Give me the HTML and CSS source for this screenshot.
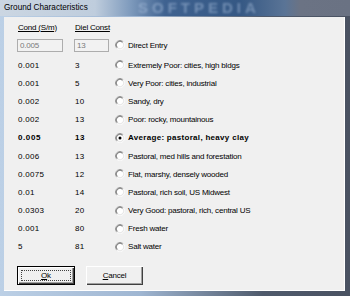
FILE: index.html
```html
<!DOCTYPE html>
<html lang="en">
<head>
  <meta charset="UTF-8" />
  <title>Ground Characteristics</title>
  <link rel="stylesheet" href="styles.css">
</head>
<body>

  <div class="window">
    <div class="titlebar">
      <span class="title">Ground Characteristics</span>
      <span class="watermark">SOFTPEDIA</span>
    </div>

    <div class="client">
      <div class="table">
        <div class="head">Cond (S/m)</div>
        <div class="head">Diel Const</div>
        <div></div>

        <div class="cell"><span class="edit wide">0.005</span></div>
        <div class="cell"><span class="edit narrow">13</span></div>
        <label class="option">
          <svg class="radio" viewBox="0 0 12 12"><use href="#radio" /></svg>Direct Entry
        </label>
      </div>

      <div class="table rows" id="rows"></div>

      <div class="buttons">
        <button class="btn default"><u>O</u>k</button>
        <button class="btn"><u>C</u>ancel</button>
      </div>
    </div>
  </div>

  <svg width="0" height="0" style="position:absolute">
    <defs>
      <g id="radio" fill="none" stroke-width="1">
        <circle cx="6" cy="6" r="5" fill="#fff" stroke="none" />
        <path d="M2.1 9.9A5.5 5.5 0 0 1 9.9 2.1" stroke="#a0a0a0" />
        <path d="M2.8 9.2A4.5 4.5 0 0 1 9.2 2.8" stroke="#505050" />
        <path d="M9.9 2.1A5.5 5.5 0 0 1 2.1 9.9" stroke="#fff" />
        <path d="M9.2 2.8A4.5 4.5 0 0 1 2.8 9.2" stroke="#dcdcdc" />
      </g>
    </defs>
  </svg>

  <script>
    var grounds = [
      ['0.001', '3', 'Extremely Poor: cities, high bldgs'],
      ['0.001', '5', 'Very Poor: cities, industrial'],
      ['0.002', '10', 'Sandy, dry'],
      ['0.002', '13', 'Poor: rocky, mountainous'],
      ['0.005', '13', 'Average: pastoral, heavy clay', true],
      ['0.006', '13', 'Pastoral, med hills and forestation'],
      ['0.0075', '12', 'Flat, marshy, densely wooded'],
      ['0.01', '14', 'Pastoral, rich soil, US Midwest'],
      ['0.0303', '20', 'Very Good: pastoral, rich, central US'],
      ['0.001', '80', 'Fresh water'],
      ['5', '81', 'Salt water']
    ];

    var rows = document.getElementById('rows');
    grounds.forEach(function (g) {
      var cls = g[3] ? ' bold' : '';
      rows.innerHTML +=
        '<div class="num' + cls + '">' + g[0] + '</div>' +
        '<div class="num' + cls + '">' + g[1] + '</div>' +
        '<label class="option' + cls + '">' +
          '<svg class="radio" viewBox="0 0 12 12"><use href="#radio" />' +
          (g[3] ? '<circle cx="6" cy="6" r="1.8" fill="#000" />' : '') +
          '</svg>' + g[2] +
        '</label>';
    });
  </script>

</body>
</html>
```

FILE: styles.css
```css
* {
  margin: 0;
  padding: 0;
  box-sizing: border-box;
}

html, body {
  width: 350px;
  height: 296px;
  overflow: hidden;
  font-family: 'Liberation Sans', Arial, sans-serif;
  font-size: 8px;
  letter-spacing: -0.2px;
  color: #000;
}

.window {
  display: flex;
  flex-direction: column;
  height: 296px;
  background: linear-gradient(90deg, #bcd0e6 0, #9fb6d2 40%, #4f5a6c 75%, #4a5262 100%);
}

.titlebar {
  position: relative;
  height: 16px;
  padding-left: 4px;
  line-height: 16px;
  font-size: 8.2px;
  letter-spacing: 0;
  overflow: hidden;
  background: linear-gradient(90deg, #cbd6e2 0, #bfcddd 95px, #7f9bbd 130px, #3f6290 165px, #355884 240px, #5a7496 285px, #6b7384 300px, #6a7283 100%);
}

.title {
  position: relative;
  z-index: 1;
}

.watermark {
  position: absolute;
  left: 138px;
  top: 0;
  line-height: 16px;
  font-size: 15px;
  font-weight: bold;
  letter-spacing: 4px;
  color: rgba(185, 205, 230, 0.45);
  filter: blur(0.8px);
}

.client {
  flex: 1;
  margin: 1px 5px 5px 4px;
  padding: 1px 0 0 13px;
  background: #f0f0f0;
  border-right: 1px solid #fff;
  border-bottom: 1px solid #fff;
}

.table {
  display: grid;
  grid-template-columns: 57px 41px 1fr;
  grid-auto-rows: 18px;
  align-items: center;
}

.rows {
  margin-top: 2px;
  grid-auto-rows: 18.2px;
}

.head {
  padding-left: 1px;
  text-decoration: underline;
}

.edit {
  display: block;
  height: 13px;
  padding-left: 2px;
  line-height: 12px;
  color: #7a7a7a;
  border: 1px solid #adadad;
  background: #f2f2f2;
}

.edit.wide {
  width: 46px;
}

.edit.narrow {
  width: 35px;
}

.num {
  padding-left: 1px;
  letter-spacing: 0.3px;
}

.option {
  display: flex;
  align-items: center;
  gap: 3px;
}

.radio {
  width: 10px;
  height: 10px;
}

.bold {
  font-weight: bold;
  letter-spacing: 0.3px;
}

.num.bold {
  letter-spacing: 0.6px;
}

.buttons {
  display: flex;
  gap: 11px;
  margin-top: 10px;
}

.btn {
  width: 57px;
  height: 19px;
  font-family: inherit;
  font-size: 8px;
  letter-spacing: -0.2px;
  background: #f0f0f0;
  border: none;
  box-shadow: inset 1px 1px #fff, inset -1px -1px #404040, inset -2px -2px #a0a0a0;
}

.btn.default {
  width: 58px;
  border: 1px solid #000;
  outline: 1px dotted #404040;
  outline-offset: -5px;
}
```
